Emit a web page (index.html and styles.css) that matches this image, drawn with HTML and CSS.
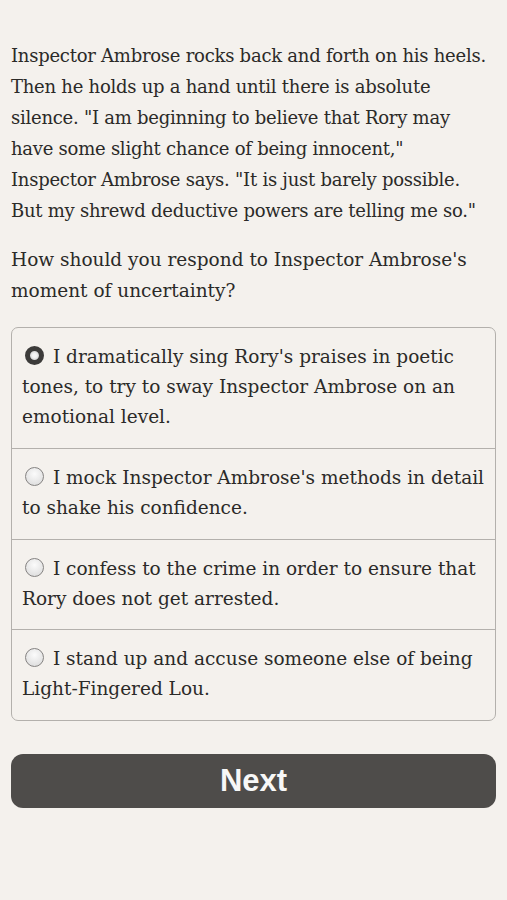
FILE: index.html
```html
<!doctype html>
<html>
  <head>
    <title>Inspector Ambrose</title>
    <link rel="stylesheet" href="styles.css">
  </head>
  <body>
    <div class="page">
      <p class="story">Inspector Ambrose rocks back and forth on his heels.<br>
        Then he holds up a hand until there is absolute<br>
        silence. "I am beginning to believe that Rory may<br>
        have some slight chance of being innocent,"<br>
        Inspector Ambrose says. "It is just barely possible.<br>
        But my shrewd deductive powers are telling me so."</p>

      <p>How should you respond to Inspector Ambrose's moment of uncertainty?</p>

      <div class="choices">
        <label class="choice">
          <input type="radio" name="choice" checked>
          <span class="radio"></span> I dramatically sing Rory's praises in poetic tones, to try to sway Inspector Ambrose on an emotional level.
        </label>
        <label class="choice">
          <input type="radio" name="choice">
          <span class="radio"></span> I mock Inspector Ambrose's methods in detail to shake his confidence.
        </label>
        <label class="choice">
          <input type="radio" name="choice">
          <span class="radio"></span> I confess to the crime in order to ensure that Rory does not get arrested.
        </label>
        <label class="choice">
          <input type="radio" name="choice">
          <span class="radio"></span> I stand up and accuse someone else of being Light-Fingered Lou.
        </label>
      </div>

      <button class="next-button">Next</button>
    </div>
  </body>
</html>
```

FILE: styles.css
```css
body {
  margin: 0;
  padding: 0;
  background-color: #f4f1ed;
  font-family: "DejaVu Serif", serif;
  font-size: 18.5px;
  color: #2b2a28;
}
.page {
  padding: 40px 11px 40px 11px;
}
p {
  margin: 0 0 18px 0;
  line-height: 31px;
}
.story {
  font-size: 18px;
  letter-spacing: -0.25px;
}
.choices {
  margin-top: 21px;
  border: 1px solid #b3b0ac;
  border-radius: 7px;
}
.choice {
  display: block;
  padding: 14px 10px 15px 10px;
  line-height: 30px;
  border-top: 1px solid #b3b0ac;
}
.choice:first-child {
  border-top: none;
  padding-bottom: 16px;
}
.choice:nth-child(2), .choice:last-child {
  padding-bottom: 16px;
}
.choice input {
  display: none;
}
.radio {
  display: inline-block;
  box-sizing: border-box;
  width: 19px;
  height: 19px;
  margin-left: 3px;
  margin-right: 3px;
  border-radius: 50%;
  border: 1px solid #858382;
  background: radial-gradient(circle at 50% 35%, #fbfbfb, #d8d8d8);
  vertical-align: -2px;
}
.choice input:checked + .radio {
  border: 5px solid #3c3b3a;
  background: radial-gradient(circle, #f4f4f4 30%, #bdbdbd 100%);
}
.next-button {
  display: block;
  width: 100%;
  height: 54px;
  margin-top: 33px;
  border: none;
  border-radius: 12px;
  background-color: #4e4c4a;
  color: #f7f7f7;
  font-family: "Liberation Sans", Arial, sans-serif;
  font-weight: bold;
  font-size: 31px;
  cursor: pointer;
}
```
